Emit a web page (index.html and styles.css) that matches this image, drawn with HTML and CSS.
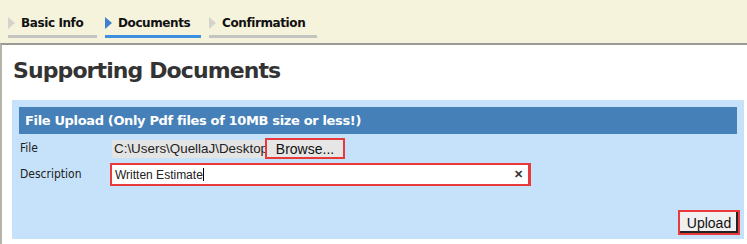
FILE: index.html
```html
<!DOCTYPE html>
<html lang="en">
<head>
  <meta charset="UTF-8" />
  <title>Supporting Documents</title>
  <link rel="stylesheet" href="styles.css">
</head>
<body>
  <nav class="steps">
    <div class="step"><span class="arrow"></span>Basic Info</div>
    <div class="step current"><span class="arrow"></span>Documents</div>
    <div class="step"><span class="arrow"></span>Confirmation</div>
  </nav>

  <main class="page">
    <h1>Supporting Documents</h1>

    <section class="upload">
      <div class="upload-head">File Upload (Only Pdf files of 10MB size or less!)</div>

      <div class="row">
        <label class="label">File</label>
        <div class="file-field">
          <span class="file-path">C:\Users\QuellaJ\Desktop</span>
          <button class="browse marked">Browse...</button>
        </div>
      </div>

      <div class="row">
        <label class="label">Description</label>
        <div class="desc marked">
          <span class="desc-text">Written Estimate<span class="caret"></span></span>
          <span class="clear">&#x2715;</span>
        </div>
      </div>

      <div class="actions">
        <button class="upload-btn marked">Upload</button>
      </div>
    </section>
  </main>
</body>
</html>
```

FILE: styles.css
```css
body {
  margin: 0;
  background: #f5f3dc;
  font-family: 'DejaVu Sans', Verdana, sans-serif;
  color: #222;
}

.steps {
  display: flex;
  height: 43px;
  padding-left: 8px;
  align-items: flex-end;
}

.step {
  display: flex;
  align-items: center;
  width: 89px;
  margin-right: 8px;
  margin-bottom: 5px;
  padding-bottom: 5px;
  border-bottom: 3px solid #c4c4c0;
  font-size: 12px;
  font-weight: bold;
  letter-spacing: -0.4px;
  color: #111;
}

.step:nth-child(2) { width: 96px; }
.step:nth-child(3) { width: 108px; }

.step.current {
  border-bottom-color: #3d8fe0;
}

.arrow {
  width: 0;
  height: 0;
  border-top: 6px solid transparent;
  border-bottom: 6px solid transparent;
  border-left: 7px solid #d4d4cc;
  margin-right: 6px;
}

.current .arrow {
  border-left-color: #3f7fd0;
}

.page {
  background: #fff;
  border-top: 2px solid #9a9a94;
  border-left: 2px solid #b4b4a8;
  height: 199px;
  padding: 0 3px 0 10px;
}

h1 {
  margin: 0;
  padding: 12px 0 15px 1px;
  font-size: 22px;
  letter-spacing: -0.9px;
  color: #333;
  line-height: 28px;
}

.upload {
  background: #c6e2fb;
  padding: 7px 7px 5px 7px;
  height: 127px;
}

.upload-head {
  background: #4580b8;
  color: #fff;
  font-size: 13px;
  font-weight: bold;
  letter-spacing: -0.35px;
  height: 27px;
  line-height: 27px;
  padding-left: 6px;
}

.row {
  display: flex;
  align-items: center;
  margin-top: 4px;
}

.label {
  width: 92px;
  padding-left: 1px;
  font-family: 'DejaVu Sans Condensed', 'DejaVu Sans', sans-serif;
  font-size: 12px;
  color: #222;
  margin-top: -2px;
}

.file-field {
  display: flex;
  align-items: center;
}

.file-path {
  background: #e4e4e4;
  font-family: 'Liberation Sans', Arial, sans-serif;
  font-size: 13.4px;
  width: 151px;
  height: 18px;
  line-height: 18px;
  padding-left: 2px;
  white-space: nowrap;
  color: #222;
}

button {
  font-family: 'Liberation Sans', Arial, sans-serif;
  font-size: 14px;
  color: #111;
  cursor: pointer;
}

.marked {
  border: 2px solid #e83a3a;
}

.browse {
  background: #e6e6e6;
  height: 21px;
  width: 80px;
  padding: 0;
}

.desc {
  display: flex;
  justify-content: space-between;
  align-items: center;
  width: 408px;
  height: 19px;
  background: #fff;
  font-family: 'Liberation Sans', Arial, sans-serif;
  font-size: 12px;
  padding: 0 5px 0 3px;
  border-right-width: 3px;
  margin-left: -2px;
}

.caret {
  display: inline-block;
  width: 1px;
  height: 13px;
  background: #000;
  vertical-align: -2px;
}

.clear {
  font-size: 11px;
  font-weight: bold;
  color: #333;
}

.actions {
  display: flex;
  justify-content: flex-end;
  margin-top: 24px;
  margin-right: -3px;
}

.upload-btn {
  background: #f0f0f0;
  height: 25px;
  width: 62px;
  padding: 0;
  box-shadow: inset -2px -2px 0 #222;
}
```
